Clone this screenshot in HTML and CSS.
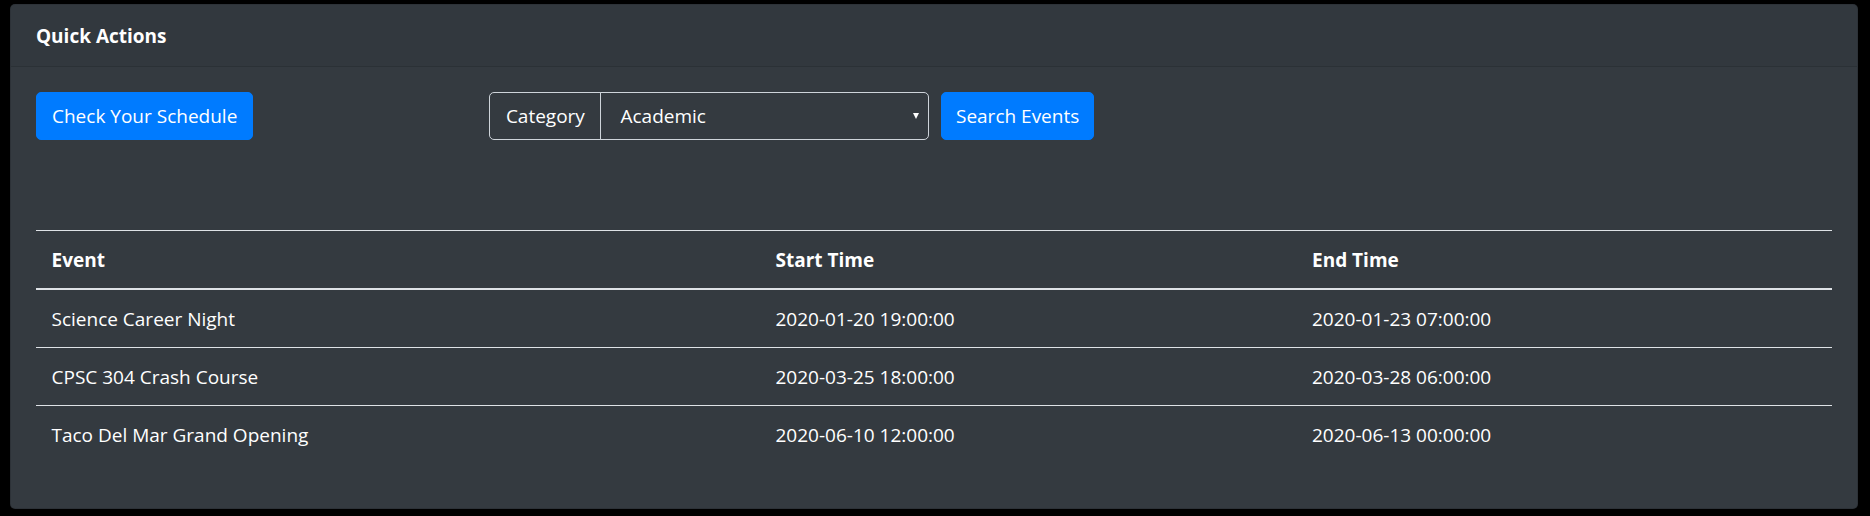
FILE: index.html
```html
<!DOCTYPE html>
<html lang="en">
<head>
<meta charset="utf-8">
<title>Quick Actions</title>
<link rel="stylesheet" href="styles.css">
</head>
<body>
<div class="card">
  <div class="card-header">Quick Actions</div>
  <div class="card-body">
    <div class="actions">
      <button class="btn" type="button">Check Your Schedule</button>
      <form class="search-form">
        <div class="input-group">
          <span class="input-label">Category</span>
          <div class="select-wrap">
            <select class="select">
              <option>Academic</option>
              <option>Social</option>
              <option>Sports</option>
            </select>
          </div>
        </div>
        <button class="btn btn-search" type="button">Search Events</button>
      </form>
    </div>
    <table class="table">
      <thead>
        <tr>
          <th class="col-event">Event</th>
          <th class="col-start">Start Time</th>
          <th class="col-end">End Time</th>
        </tr>
      </thead>
      <tbody>
        <tr>
          <td>Science Career Night</td>
          <td>2020-01-20 19:00:00</td>
          <td>2020-01-23 07:00:00</td>
        </tr>
        <tr>
          <td>CPSC 304 Crash Course</td>
          <td>2020-03-25 18:00:00</td>
          <td>2020-03-28 06:00:00</td>
        </tr>
        <tr>
          <td>Taco Del Mar Grand Opening</td>
          <td>2020-06-10 12:00:00</td>
          <td>2020-06-13 00:00:00</td>
        </tr>
      </tbody>
    </table>
  </div>
</div>
</body>
</html>
```

FILE: styles.css
```css
* {
  box-sizing: border-box;
}

html, body {
  margin: 0;
  background: #000;
}

body {
  padding: 4px 12px 8px 10px;
  font-family: "Open Sans", "Noto Sans", "Liberation Sans", sans-serif;
  font-size: 19px;
  line-height: 30px;
  color: #fff;
}

.card {
  background: #343a40;
  border: 1px solid rgba(0, 0, 0, 0.125);
  border-radius: 5px;
  overflow: hidden;
}

.card-header {
  padding: 16px 25px 15px;
  background: rgba(0, 0, 0, 0.03);
  border-bottom: 1px solid rgba(0, 0, 0, 0.125);
  font-weight: 700;
}

.card-body {
  padding: 25px;
}

.actions {
  display: flex;
  align-items: center;
  margin-bottom: 90px;
}

.btn {
  font-family: inherit;
  font-size: 19px;
  line-height: 30px;
  color: #fff;
  background: #007bff;
  border: 1px solid #007bff;
  border-radius: 5px;
  padding: 8px 15px;
  cursor: pointer;
}

.btn-search {
  padding: 8px 14px;
}

.search-form {
  display: flex;
  align-items: center;
  gap: 12.3px;
  margin-left: 235.5px;
}

.input-group {
  display: flex;
  align-items: stretch;
  height: 48px;
}

.input-label {
  display: flex;
  align-items: center;
  padding: 0 15.6px 0 16.1px;
  border: 1px solid #ced4da;
  border-radius: 5px 0 0 5px;
  color: #fff;
}

.select-wrap {
  position: relative;
  width: 328.2px;
  margin-left: -1px;
}

.select-wrap::after {
  content: "";
  position: absolute;
  right: 10px;
  top: 21px;
  border-left: 3px solid transparent;
  border-right: 3px solid transparent;
  border-top: 6px solid #fff;
  pointer-events: none;
}

.select {
  -webkit-appearance: none;
  appearance: none;
  width: 100%;
  height: 100%;
  margin: 0;
  padding: 0 30px 0 19px;
  font-family: inherit;
  font-size: 19px;
  color: #fff;
  background: transparent;
  border: 1px solid #ced4da;
  border-radius: 0 5px 5px 0;
  outline: none;
}

.select option {
  color: #000;
}

.table {
  width: 100%;
  border-collapse: collapse;
  margin-bottom: 20px;
  table-layout: fixed;
}

.table th,
.table td {
  text-align: left;
  vertical-align: top;
  padding: 14px 15.5px 13.3px;
  border-top: 1px solid #dee2e6;
}

.table thead th {
  font-weight: 700;
  padding-top: 13.5px;
  padding-bottom: 13px;
  border-bottom: 2px solid #dee2e6;
}

.col-event {
  width: 724px;
}

.col-start {
  width: 536.5px;
}

.col-end {
  width: auto;
}
```
